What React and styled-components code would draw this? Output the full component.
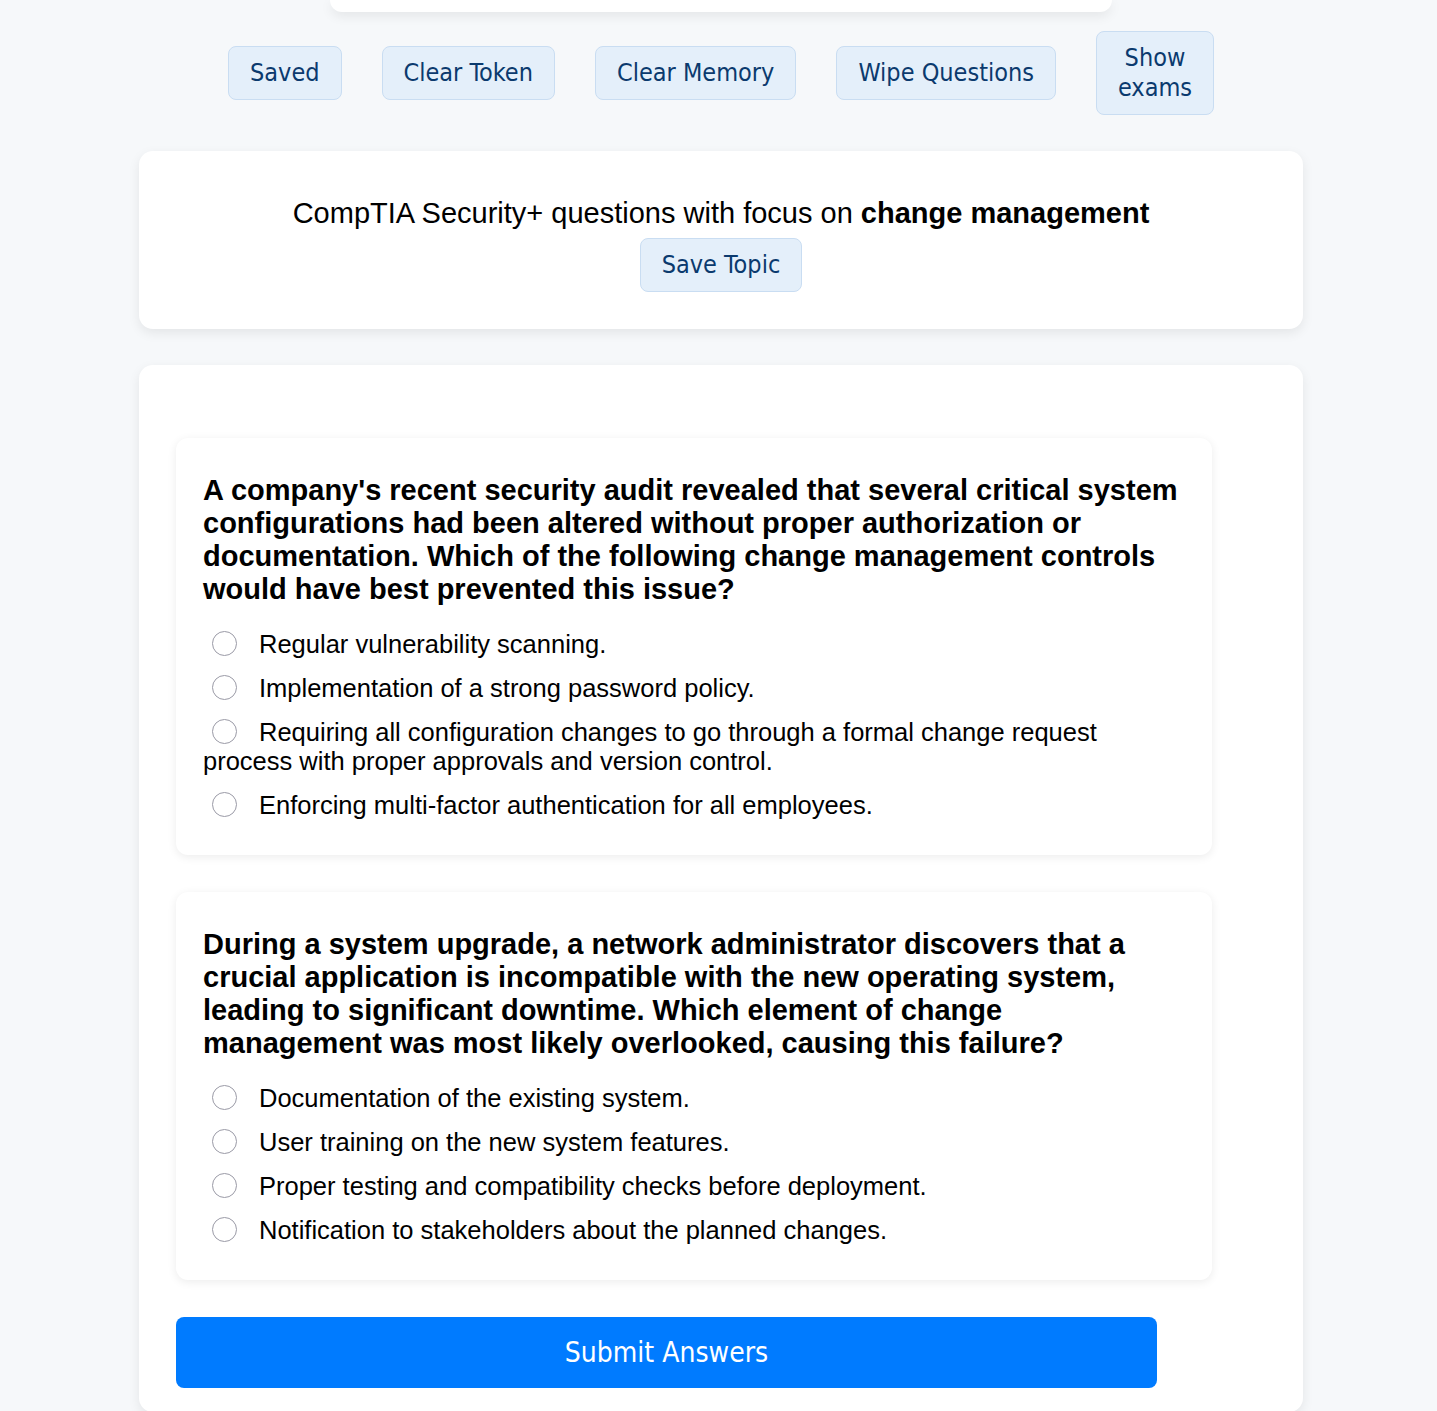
import React from "react";
import styled, { createGlobalStyle } from "styled-components";

const GlobalStyle = createGlobalStyle`
  html, body {
    margin: 0;
    padding: 0;
    background: #f6f8fa;
  }
  body {
    font-family: "Liberation Sans", Arial, sans-serif;
    color: #000;
  }
`;

const Page = styled.div`
  padding: 0 0 0 5px;
  display: flex;
  flex-direction: column;
  align-items: center;
`;

const TopCard = styled.div`
  width: 782px;
  height: 12px;
  background: #fff;
  border-radius: 0 0 14px 14px;
  box-shadow: 0 4px 12px rgba(0, 0, 0, 0.08);
`;

const Toolbar = styled.div`
  display: flex;
  align-items: center;
  justify-content: center;
  gap: 40px;
  margin: 19px 0 36px;
`;

const Button = styled.button`
  font-family: "DejaVu Sans Condensed", "DejaVu Sans", sans-serif;
  font-stretch: condensed;
  font-size: 25px;
  line-height: 30px;
  color: #0b3a6e;
  background: #e4effa;
  border: 1px solid #c9ddf2;
  border-radius: 8px;
  padding: 11px 21px;
  max-width: ${(p) => (p.$narrow ? "118px" : "none")};
  cursor: pointer;
`;

const Card = styled.div`
  width: 1164px;
  box-sizing: border-box;
  background: #fff;
  border-radius: 14px;
  box-shadow: 0 4px 12px rgba(0, 0, 0, 0.08);
`;

const TopicCard = styled(Card)`
  padding: 46px 20px 37px;
  display: flex;
  flex-direction: column;
  align-items: center;
  gap: 9px;
  margin-bottom: 36px;
`;

const TopicText = styled.div`
  font-size: 29px;
  line-height: 32px;
`;

const QuizCard = styled(Card)`
  padding: 73px 91px 24px 37px;
  display: flex;
  flex-direction: column;
  gap: 37px;
`;

const QuestionCard = styled.div`
  background: #fff;
  border-radius: 12px;
  box-shadow: 0 2px 10px rgba(0, 0, 0, 0.08);
  padding: 36px 27px 35px;
`;

const QuestionTitle = styled.h3`
  margin: 0 0 24px;
  font-size: 29px;
  line-height: 33px;
  font-weight: 700;
`;

const Option = styled.label`
  display: block;
  font-size: 25.5px;
  line-height: 29px;
  margin-bottom: 15px;

  &:last-child {
    margin-bottom: 0;
  }
`;

const Radio = styled.input.attrs({ type: "radio" })`
  appearance: none;
  display: inline-block;
  width: 25px;
  height: 25px;
  margin: 0 22px 0 9px;
  border: 1.5px solid #9a9aa6;
  border-radius: 50%;
  box-sizing: border-box;
  vertical-align: -3px;
  background: #fff;
`;

const SubmitButton = styled.button`
  width: 981px;
  height: 71px;
  border: none;
  border-radius: 8px;
  background: #007bff;
  color: #fff;
  font-family: "DejaVu Sans Condensed", "DejaVu Sans", sans-serif;
  font-stretch: condensed;
  font-size: 28px;
  cursor: pointer;
`;

const questions = [
  {
    text: "A company's recent security audit revealed that several critical system configurations had been altered without proper authorization or documentation. Which of the following change management controls would have best prevented this issue?",
    options: [
      "Regular vulnerability scanning.",
      "Implementation of a strong password policy.",
      "Requiring all configuration changes to go through a formal change request process with proper approvals and version control.",
      "Enforcing multi-factor authentication for all employees.",
    ],
  },
  {
    text: "During a system upgrade, a network administrator discovers that a crucial application is incompatible with the new operating system, leading to significant downtime. Which element of change management was most likely overlooked, causing this failure?",
    options: [
      "Documentation of the existing system.",
      "User training on the new system features.",
      "Proper testing and compatibility checks before deployment.",
      "Notification to stakeholders about the planned changes.",
    ],
  },
];

const App = () => (
  <>
    <GlobalStyle />
    <Page>
      <TopCard />
      <Toolbar>
        <Button>Saved</Button>
        <Button>Clear Token</Button>
        <Button>Clear Memory</Button>
        <Button>Wipe Questions</Button>
        <Button $narrow>Show exams</Button>
      </Toolbar>
      <TopicCard>
        <TopicText>
          CompTIA Security+ questions with focus on <b>change management</b>
        </TopicText>
        <Button>Save Topic</Button>
      </TopicCard>
      <QuizCard>
        {questions.map((q, i) => (
          <QuestionCard key={i}>
            <QuestionTitle>{q.text}</QuestionTitle>
            {q.options.map((opt, j) => (
              <Option key={j}>
                <Radio name={`q${i}`} />
                {opt}
              </Option>
            ))}
          </QuestionCard>
        ))}
        <div>
          <SubmitButton>Submit Answers</SubmitButton>
        </div>
      </QuizCard>
    </Page>
  </>
);

export default App;
